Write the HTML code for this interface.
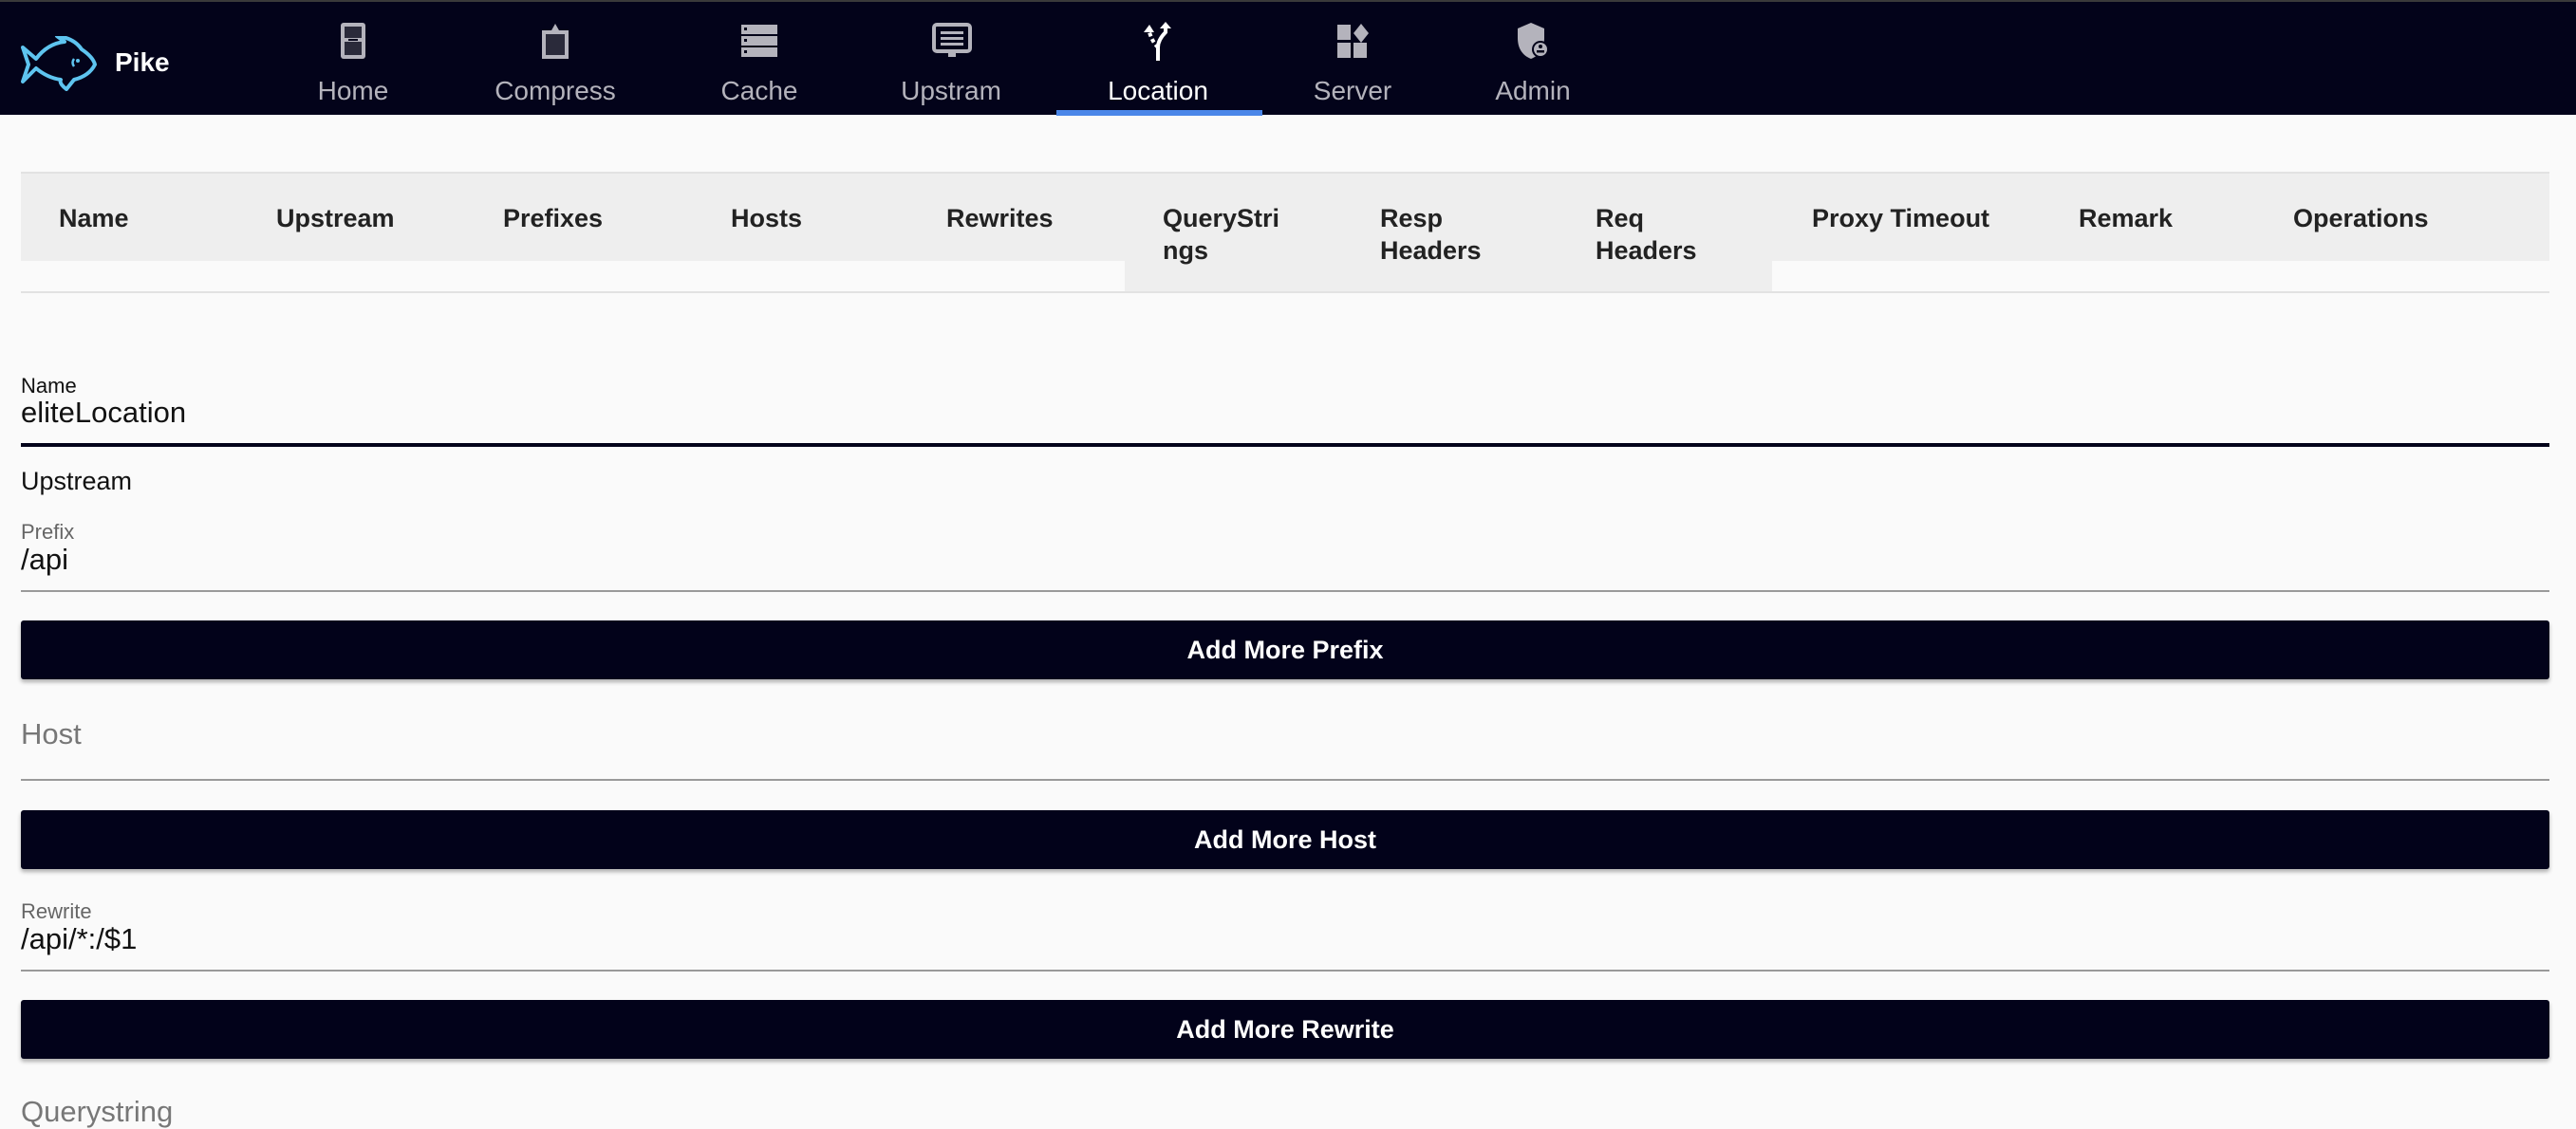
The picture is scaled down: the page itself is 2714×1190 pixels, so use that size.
<!DOCTYPE html>
<html><head><meta charset="utf-8"><style>
*{margin:0;padding:0;box-sizing:border-box}
body{width:2714px;height:1174px;background:#fafafa;font-family:"Liberation Sans",sans-serif;position:relative;overflow:hidden;color:#111}
.a{position:absolute;white-space:nowrap}
.nav{position:absolute;left:0;top:0;width:2714px;height:121px;background:#03031a;border-top:2px solid #3a3a3a}
.ni{position:absolute;top:0;width:220px;margin-left:-110px;text-align:center;color:#b4b3bc;font-size:28px}
.ni svg{position:absolute;left:90px;top:20px}
.ni span{position:absolute;left:0;right:0;top:78px}
.th{position:absolute;font-weight:bold;font-size:27px;line-height:34px;color:#222;top:213px}
.btn{position:absolute;left:22px;width:2664px;height:62px;background:#02021a;border-radius:3px;box-shadow:0 3px 4px rgba(0,0,0,.3);color:#fff;font-size:27px;font-weight:bold;text-align:center;line-height:62px}
.line{position:absolute;left:22px;width:2664px;height:2px;background:#9a9a9a}
.lbl{position:absolute;left:22px;font-size:22px;color:#666}
.val{position:absolute;left:22px;font-size:31px;color:#111}
</style></head><body>
<div class="nav">
 <svg class="a" style="left:20px;top:36px" width="84" height="58" viewBox="0 0 84 58"><path d="M4 12 L18 24 Q30 8 48 6 L40 0 Q58 2 66 14 Q78 22 80 30 Q74 42 58 46 L50 56 Q42 50 44 46 Q30 44 18 34 L4 48 L10 30 Z" fill="none" stroke="#5ec4ef" stroke-width="4" stroke-linejoin="round"/><path d="M58 24 q-3 4 0 8" stroke="#5ec4ef" stroke-width="2.5" fill="none"/><circle cx="62" cy="26" r="2" fill="#5ec4ef"/></svg>
 <div class="a" style="left:121px;top:48px;color:#fff;font-weight:bold;font-size:28px">Pike</div>
 <div class="ni" style="left:372px"><svg width="40" height="42" viewBox="0 0 40 42"><rect x="7" y="2" width="26" height="38" rx="3" fill="#b4b3bc"/><rect x="11" y="6" width="18" height="12" fill="#2a2a3a"/><rect x="11" y="22" width="18" height="14" fill="#2a2a3a"/><rect x="15" y="19" width="10" height="2" fill="#03031a"/></svg><span>Home</span></div>
 <div class="ni" style="left:585px"><svg width="40" height="42" viewBox="0 0 40 42"><path d="M6 10h10l4-7 4 7h10v30H6z" fill="#b4b3bc"/><rect x="10" y="14" width="20" height="22" fill="#2a2a3a"/></svg><span>Compress</span></div>
 <div class="ni" style="left:800px"><svg width="40" height="42" viewBox="0 0 40 42"><rect x="1" y="4" width="38" height="10" fill="#b4b3bc"/><rect x="1" y="16" width="38" height="10" fill="#b4b3bc"/><rect x="1" y="28" width="38" height="10" fill="#b4b3bc"/><rect x="4" y="7" width="3" height="3" fill="#03031a"/><rect x="4" y="19" width="3" height="3" fill="#03031a"/><rect x="4" y="31" width="3" height="3" fill="#03031a"/></svg><span>Cache</span></div>
 <div class="ni" style="left:1002px"><svg width="42" height="42" viewBox="0 0 42 42"><rect x="2" y="4" width="38" height="28" rx="3" fill="none" stroke="#b4b3bc" stroke-width="4"/><rect x="9" y="11" width="24" height="3" fill="#b4b3bc"/><rect x="9" y="17" width="24" height="3" fill="#b4b3bc"/><rect x="9" y="23" width="24" height="3" fill="#b4b3bc"/><rect x="17" y="32" width="8" height="6" fill="#b4b3bc"/></svg><span>Upstram</span></div>
 <div class="ni" style="left:1220px;color:#fff"><svg width="40" height="44" viewBox="0 0 40 44"><path d="M20 42V28 Q20 20 28 12 V6" stroke="#fff" stroke-width="4" fill="none"/><path d="M20 28 Q14 22 11 12" stroke="#fff" stroke-width="4" fill="none" stroke-dasharray="4 3"/><path d="M22 8l6-7 6 7z M5 12l6-8 5 8z" fill="#fff"/></svg><span>Location</span></div>
 <div class="ni" style="left:1425px"><svg width="40" height="42" viewBox="0 0 40 42"><rect x="4" y="4" width="14" height="16" fill="#b4b3bc"/><path d="M29 3l8 10-8 10-8-10z" fill="#b4b3bc"/><rect x="4" y="23" width="14" height="16" fill="#b4b3bc"/><rect x="21" y="23" width="14" height="16" fill="#b4b3bc"/></svg><span>Server</span></div>
 <div class="ni" style="left:1615px"><svg width="40" height="42" viewBox="0 0 40 42"><path d="M18 2l14 6v10c0 12-6 19-14 22-8-3-14-10-14-22V8z" fill="#b4b3bc"/><circle cx="28" cy="30" r="9" fill="#03031a"/><circle cx="28" cy="30" r="7" fill="#b4b3bc"/><circle cx="28" cy="27" r="2" fill="#03031a"/><rect x="24" y="31" width="8" height="2.5" fill="#03031a"/></svg><span>Admin</span></div>
 <div class="a" style="left:1113px;top:114px;width:217px;height:6px;background:#4a86e8"></div>
</div>

<div class="a" style="left:22px;top:181px;width:2664px;height:2px;background:#e2e2e2"></div>
<div class="a" style="left:22px;top:183px;width:2664px;height:92px;background:#eeeeee"></div>
<div class="a" style="left:1185px;top:275px;width:682px;height:33px;background:#eeeeee"></div>
<div class="a" style="left:22px;top:307px;width:2664px;height:2px;background:#e2e2e2"></div>
<div class="th" style="left:62px">Name</div>
<div class="th" style="left:291px">Upstream</div>
<div class="th" style="left:530px">Prefixes</div>
<div class="th" style="left:770px">Hosts</div>
<div class="th" style="left:997px">Rewrites</div>
<div class="th" style="left:1225px">QueryStri<br>ngs</div>
<div class="th" style="left:1454px">Resp<br>Headers</div>
<div class="th" style="left:1681px">Req<br>Headers</div>
<div class="th" style="left:1909px">Proxy Timeout</div>
<div class="th" style="left:2190px">Remark</div>
<div class="th" style="left:2416px">Operations</div>

<div class="lbl" style="top:394px;color:#111">Name</div>
<div class="val" style="top:417px">eliteLocation</div>
<div class="a" style="left:22px;top:467px;width:2664px;height:4px;background:#03031a"></div>
<div class="val" style="top:492px;font-size:27px">Upstream</div>
<div class="lbl" style="top:548px">Prefix</div>
<div class="val" style="top:572px">/api</div>
<div class="line" style="top:622px"></div>
<div class="btn" style="top:654px">Add More Prefix</div>
<div class="val" style="top:756px;color:#777">Host</div>
<div class="line" style="top:821px"></div>
<div class="btn" style="top:854px">Add More Host</div>
<div class="lbl" style="top:948px">Rewrite</div>
<div class="val" style="top:972px">/api/*:/$1</div>
<div class="line" style="top:1022px"></div>
<div class="btn" style="top:1054px">Add More Rewrite</div>
<div class="val" style="top:1154px;color:#777">Querystring</div>
</body></html>
